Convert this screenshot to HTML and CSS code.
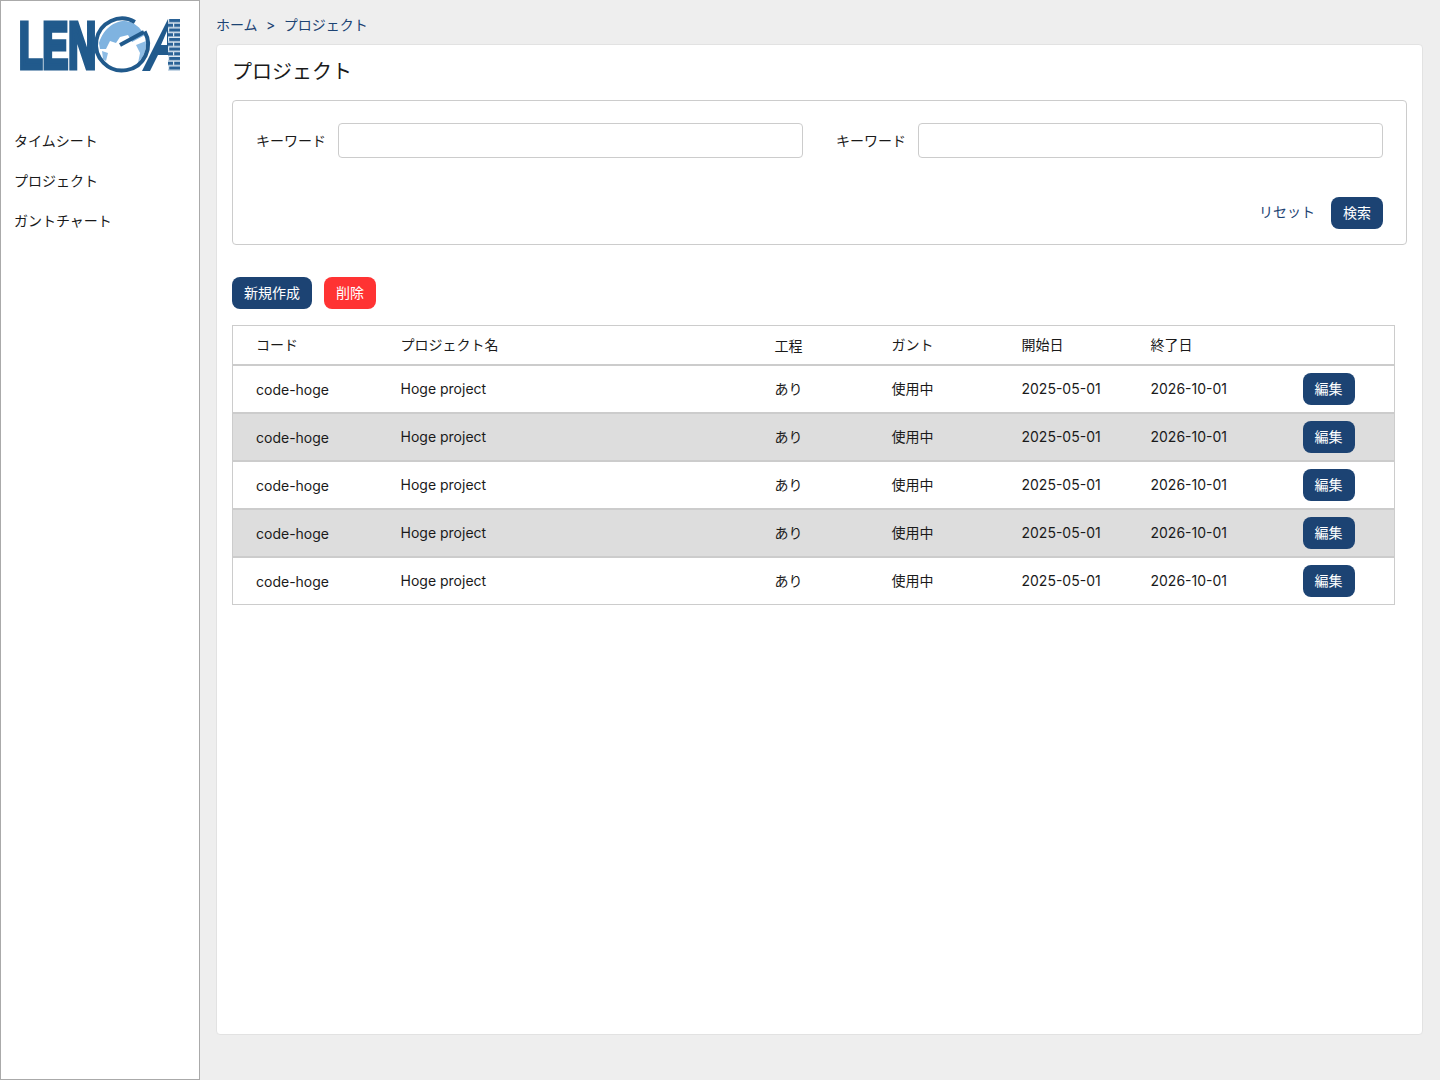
FILE: index.html
```html
<!DOCTYPE html>
<html lang="ja">
<head>
    <meta charset="UTF-8">
    <meta name="viewport" content="width=device-width, initial-scale=1.0">
    <title>プロジェクト</title>
    <link rel="stylesheet" href="styles.css">
</head>
<body>
    <aside class="sidebar">
        <div class="logo">
            <svg width="162" height="60" viewBox="0 0 162 60">
                <defs>
                    <clipPath id="globeClip"><circle cx="102" cy="29.5" r="24"></circle></clipPath>
                    <pattern id="bricks" width="12" height="9.5" patternUnits="userSpaceOnUse" y="4">
                        <rect width="12" height="9.5" fill="#2a6296"></rect>
                        <rect y="3.2" width="12" height="1.5" fill="#dfe9f2"></rect>
                        <rect y="8" width="12" height="1.5" fill="#dfe9f2"></rect>
                        <rect x="4" y="0" width="1.2" height="3.2" fill="#dfe9f2"></rect>
                        <rect x="9" y="4.7" width="1.2" height="3.3" fill="#dfe9f2"></rect>
                    </pattern>
                </defs>
                <text class="logo-text" x="-1" y="53" textLength="77" lengthAdjust="spacingAndGlyphs">LEN</text>
                <circle cx="102" cy="29.5" r="24" fill="#fff"></circle>
                <g clip-path="url(#globeClip)">
                    <path d="M79 28 C84 12 96 6 104 6 C114 6 122 12 125 20 L112 27 L108 20 L100 22 L96 28 L90 26 L86 34 L80 34 Z" fill="#7fb3e0"></path>
                    <path d="M116 30 L126 26 L126 40 L118 48 L120 38 Z M82 36 L88 38 L86 46 L83 44 Z" fill="#8dbce5"></path>
                </g>
                <path d="M114.9 6.9 A26 26 0 1 0 124.6 16.6" fill="none" stroke="#215a8c" stroke-width="4"></path>
                <path d="M100 30 L124 17" fill="none" stroke="#215a8c" stroke-width="4"></path>
                <path fill-rule="evenodd" d="M148 4 L148 40 L138 40 L130 56 L122 56 Z M147 16 L147 30 L141 30 Z" fill="#215a8c"></path>
                <rect x="148" y="4" width="12" height="52" fill="url(#bricks)"></rect>
            </svg>
        </div>
        <nav class="menu">
            <a href="#">タイムシート</a>
            <a href="#">プロジェクト</a>
            <a href="#">ガントチャート</a>
        </nav>
    </aside>
    <main class="main">
        <div class="breadcrumb">
            <a href="#">ホーム</a>
            <span class="sep">&gt;</span>
            <a href="#">プロジェクト</a>
        </div>
        <section class="card">
            <h1>プロジェクト</h1>
            <form class="search">
                <div class="search-fields">
                    <label class="field">
                        <span>キーワード</span>
                        <input type="text">
                    </label>
                    <label class="field">
                        <span>キーワード</span>
                        <input type="text">
                    </label>
                </div>
                <div class="search-actions">
                    <a href="#" class="reset">リセット</a>
                    <button type="button" class="btn">検索</button>
                </div>
            </form>
            <div class="toolbar">
                <button type="button" class="btn">新規作成</button>
                <button type="button" class="btn btn-danger">削除</button>
            </div>
            <table class="list">
                <thead>
                    <tr>
                        <th class="col-code">コード</th>
                        <th class="col-name">プロジェクト名</th>
                        <th class="col-flag"><span class="nudge">工程</span></th>
                        <th class="col-gantt">ガント</th>
                        <th class="col-date">開始日</th>
                        <th class="col-date2">終了日</th>
                        <th></th>
                    </tr>
                </thead>
                <tbody>
                    <tr>
                        <td><span class="nudge">code-hoge</span></td>
                        <td>Hoge project</td>
                        <td>あり</td>
                        <td>使用中</td>
                        <td>2025-05-01</td>
                        <td>2026-10-01</td>
                        <td><button type="button" class="btn">編集</button></td>
                    </tr>
                    <tr>
                        <td><span class="nudge">code-hoge</span></td>
                        <td>Hoge project</td>
                        <td>あり</td>
                        <td>使用中</td>
                        <td>2025-05-01</td>
                        <td>2026-10-01</td>
                        <td><button type="button" class="btn">編集</button></td>
                    </tr>
                    <tr>
                        <td><span class="nudge">code-hoge</span></td>
                        <td>Hoge project</td>
                        <td>あり</td>
                        <td>使用中</td>
                        <td>2025-05-01</td>
                        <td>2026-10-01</td>
                        <td><button type="button" class="btn">編集</button></td>
                    </tr>
                    <tr>
                        <td><span class="nudge">code-hoge</span></td>
                        <td>Hoge project</td>
                        <td>あり</td>
                        <td>使用中</td>
                        <td>2025-05-01</td>
                        <td>2026-10-01</td>
                        <td><button type="button" class="btn">編集</button></td>
                    </tr>
                    <tr>
                        <td><span class="nudge">code-hoge</span></td>
                        <td>Hoge project</td>
                        <td>あり</td>
                        <td>使用中</td>
                        <td>2025-05-01</td>
                        <td>2026-10-01</td>
                        <td><button type="button" class="btn">編集</button></td>
                    </tr>
                </tbody>
            </table>
        </section>
    </main>
</body>
</html>
```

FILE: styles.css
```css
* {
    box-sizing: border-box;
}

html, body {
    height: 100%;
}

body {
    margin: 0;
    display: flex;
    height: 1080px;
    overflow: hidden;
    background-color: #eeeeee;
    color: #1a1a1a;
    font-family: Inter, "Noto Sans CJK JP", sans-serif;
    font-size: 14px;
    line-height: 20px;
}

a {
    text-decoration: none;
}

.sidebar {
    width: 200px;
    flex-shrink: 0;
    background-color: #fff;
    border: 1px solid #aaaaaa;
}

.logo {
    height: 120px;
    padding: 14px 0 0 19px;
}

.logo svg {
    display: block;
    overflow: visible;
}

.logo-text {
    font-family: "Liberation Sans", sans-serif;
    font-weight: bold;
    font-size: 64px;
    fill: #215a8c;
    stroke: #215a8c;
    stroke-width: 5px;
}

.menu {
    display: flex;
    flex-direction: column;
}

.menu a {
    height: 40px;
    padding: 10px 13px;
    color: #1a1a1a;
}

.main {
    flex: 1;
    padding: 15px 17px 45px 16px;
    display: flex;
    flex-direction: column;
}

.breadcrumb {
    height: 29px;
    color: #1c4373;
    display: flex;
    gap: 8.5px;
}

.breadcrumb a {
    color: #1c4373;
}

.card {
    flex: 1;
    background-color: #fff;
    border: 1px solid #e2e2e2;
    border-radius: 4px;
    padding: 13px 15px 12px;
}

h1 {
    margin: 0 0 13px;
    font-size: 20px;
    font-weight: 400;
    line-height: 28px;
    height: 29px;
}

.search {
    height: 145px;
    border: 1px solid #cccccc;
    border-radius: 4px;
    padding: 22px 23px 15px;
    display: flex;
    flex-direction: column;
    justify-content: space-between;
}

.search-fields {
    display: flex;
    gap: 33px;
}

.field {
    flex: 1;
    display: flex;
    align-items: center;
    gap: 12px;
}

.field input {
    flex: 1;
    height: 35px;
    border: 1px solid #cccccc;
    border-radius: 4px;
    outline: none;
}

.search-actions {
    display: flex;
    justify-content: flex-end;
    align-items: center;
    gap: 16px;
}

.reset {
    color: #1c4373;
    margin-bottom: 2px;
}

.btn {
    height: 32px;
    padding: 0 12px;
    border: none;
    border-radius: 8px;
    background-color: #1c4373;
    color: #fff;
    font: inherit;
    cursor: pointer;
}

.btn-danger {
    background-color: #ff3333;
}

.toolbar {
    display: flex;
    gap: 12px;
    margin: 32px 0 16px;
}

.list {
    width: 1163px;
    table-layout: fixed;
    border-collapse: collapse;
    border: 1px solid #cccccc;
}

.list th, .list td {
    padding: 0 0 0 23px;
    font-weight: 400;
    text-align: left;
}

.list thead tr {
    height: 39px;
    border-bottom: 2px solid #cccccc;
}

.list tbody tr {
    height: 48px;
    border-bottom: 2px solid #cccccc;
}

.list tbody tr:last-child {
    border-bottom: none;
}

.list tbody tr:nth-child(even) {
    background-color: #dddddd;
}

.nudge {
    position: relative;
    top: 1px;
}

.col-code {
    width: 145px;
}

.col-name {
    width: 374px;
}

.col-flag {
    width: 117px;
}

.col-gantt {
    width: 130px;
}

.col-date {
    width: 129px;
}

.col-date2 {
    width: 152px;
}
```
